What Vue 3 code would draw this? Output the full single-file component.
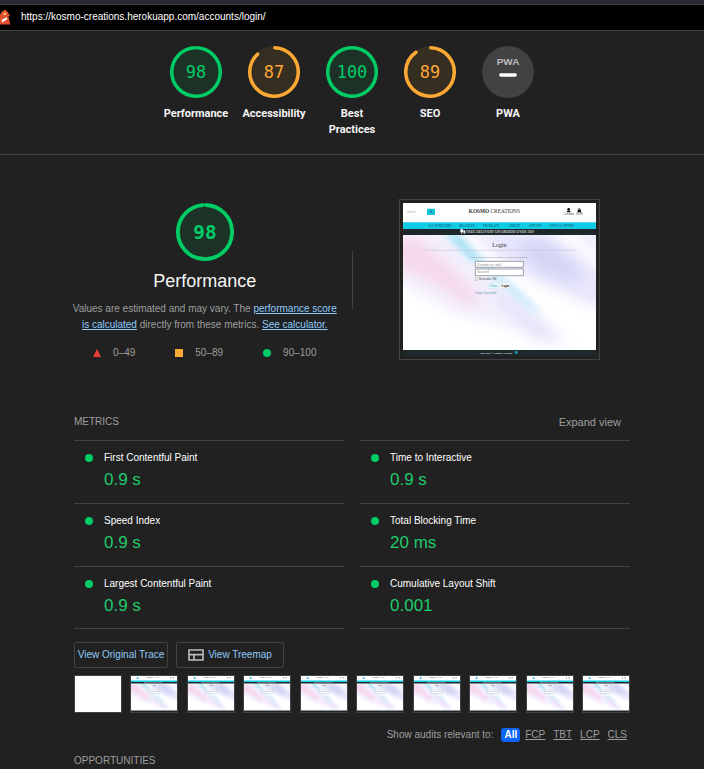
<script setup>
import { ref } from 'vue'

const R = 56
const CIRC = 2 * Math.PI * R

const categories = [
  { name: 'Performance', score: 98, tone: 'pass' },
  { name: 'Accessibility', score: 87, tone: 'average' },
  { name: 'Best Practices', score: 100, tone: 'pass' },
  { name: 'SEO', score: 89, tone: 'average' },
]

const metrics = [
  { name: 'First Contentful Paint', value: '0.9 s' },
  { name: 'Time to Interactive', value: '0.9 s' },
  { name: 'Speed Index', value: '0.9 s' },
  { name: 'Total Blocking Time', value: '20 ms' },
  { name: 'Largest Contentful Paint', value: '0.9 s' },
  { name: 'Cumulative Layout Shift', value: '0.001' },
]

const filters = ['All', 'FCP', 'TBT', 'LCP', 'CLS']
const filter = ref('All')

// The round caps reach a little past both ends of the arc.
function dash(score) {
  const gap = score === 100 ? 0 : Math.max(CIRC * (1 - score / 100), 9)
  return `${CIRC - gap} ${gap}`
}
</script>

<template>
  <div class="report">
    <header class="topbar">
      <svg class="logo" viewBox="0 0 11 16" aria-hidden="true">
        <path d="M1 5V3.4L4.8.6 8.4 3.4V5H9.6v2H8.4L10.2 15.6H0V5Z" fill="#e2502f" />
        <path d="M3.4 3.8h2.8V6H3.4Z" fill="#ffc56b" />
        <path d="M2 10.4 7 8.2l.3 2L2 13.6Z" fill="#fff" />
      </svg>
      <span>https://kosmo-creations.herokuapp.com/accounts/login/</span>
    </header>

    <nav class="scores">
      <a v-for="c in categories" :key="c.name" href="#performance" class="score">
        <svg class="gauge" :class="c.tone" viewBox="0 0 120 120">
          <circle class="disc" cx="60" cy="60" r="60" />
          <circle class="ring" cx="60" cy="60" :r="R" :stroke-dasharray="dash(c.score)" transform="rotate(-88 60 60)" />
          <text x="60" y="74" font-size="39">{{ c.score }}</text>
        </svg>
        <span class="label">{{ c.name }}</span>
      </a>
      <a href="#pwa" class="score">
        <svg class="gauge" viewBox="0 0 120 120">
          <circle cx="60" cy="60" r="60" fill="#424242" />
          <text class="pwa" x="60" y="43" font-size="23">PWA</text>
          <rect x="40" y="63" width="40" height="8" rx="3" fill="#fff" />
        </svg>
        <span class="label">PWA</span>
      </a>
    </nav>

    <main class="content">
      <section id="performance" class="overview">
        <div class="summary">
          <svg class="gauge big pass" viewBox="0 0 120 120">
            <circle class="disc" cx="60" cy="60" r="60" />
            <circle class="ring" cx="60" cy="60" :r="R" :stroke-dasharray="dash(98)" transform="rotate(-88 60 60)" />
            <text class="strong" x="60" y="74" font-size="40">98</text>
          </svg>
          <h1>Performance</h1>
          <p>
            Values are estimated and may vary. The <a href="#score">performance score<br />is calculated</a>
            directly from these metrics. <a href="#calculator">See calculator.</a>
          </p>
          <ul class="scale">
            <li><svg viewBox="0 0 8 8"><path d="M4 0 8 8H0Z" fill="#eb3b36" /></svg>0–49</li>
            <li><svg viewBox="0 0 8 8"><path d="M0 0h8v8H0Z" fill="#ffa935" /></svg>50–89</li>
            <li><svg viewBox="0 0 8 8"><circle cx="4" cy="4" r="4" fill="#0c6" /></svg>90–100</li>
          </ul>
        </div>
        <div class="rule"></div>
        <div class="shot">
          <svg viewBox="0 0 579 459">
            <defs>
              <filter id="soft" x="-30%" y="-30%" width="160%" height="160%"><feGaussianBlur stdDeviation="20" /></filter>
              <filter id="streak" x="-30%" y="-30%" width="160%" height="160%"><feGaussianBlur stdDeviation="11" /></filter>
              <clipPath id="pane"><path d="M0 96h579v345H0Z" /></clipPath>
              <symbol id="page" viewBox="0 0 579 459">
                <path d="M0 0h579v459H0Z" fill="#fff" />
                <g clip-path="url(#pane)">
                  <g filter="url(#soft)">
                    <path d="M-40 80H130L400 340 430 420 300 370 150 330-40 220Z" fill="#f3effc" />
                    <path d="M-30 110 40 100 130 180 240 290 200 310 90 240-30 190Z" fill="#f6d8ee" />
                    <path d="M200 80H430L640 240V330L480 270 330 200Z" fill="#e6e5fb" />
                    <path d="M330 120 430 110 520 190 530 240 420 210Z" fill="#d4d4f6" />
                    <path d="M500 80H620V180Z" fill="#ebeafc" />
                    <path d="M240 250 330 270 490 420 400 410Z" fill="#e6e2fa" />
                  </g>
                  <g filter="url(#streak)">
                    <path d="M120 90h46L240 170 210 180Z" fill="#a9e2f6" />
                    <path d="M200 165 240 170 350 265 420 335 380 320Z" fill="#c6e9fa" />
                  </g>
                </g>
                <path d="M72 17h24v19H72Z" fill="#17c5dc" />
                <circle cx="83" cy="25" r="3" fill="none" stroke="#126b7c" stroke-width="2" />
                <path d="m85 28 4 4" stroke="#126b7c" stroke-width="2" />
                <path d="M0 58h579v20H0Z" fill="#10cbe6" />
                <path d="M0 78h579v18H0ZM0 441h579v18H0Z" fill="#1e2729" />
                <g font-family="Liberation Serif, serif" fill="#333">
                  <text x="12" y="29" font-size="9" fill="#999">Search</text>
                  <text x="274" y="30" font-size="16" text-anchor="middle"><tspan font-weight="bold">KOSMO</tspan> CREATIONS</text>
                  <g font-size="9" text-anchor="middle">
                    <text x="497" y="37">Account</text>
                    <text x="529" y="37">£0.00</text>
                  </g>
                  <g font-size="9" text-anchor="middle" fill="#0c4c5c">
                    <text x="111" y="71">ALL JEWELLERY</text>
                    <text x="192" y="71">BRACELET</text>
                    <text x="265" y="71">NECKLACE</text>
                    <text x="334" y="71">ANKLET</text>
                    <text x="397" y="71">GIFT SET</text>
                    <text x="477" y="71">SPECIAL OFFERS</text>
                  </g>
                  <text x="190" y="91" font-size="11" fill="#fff">FREE DELIVERY ON ORDERS OVER £60!</text>
                  <text x="289" y="132" font-size="18" text-anchor="middle">Login</text>
                  <text x="288" y="165" font-size="7" text-anchor="middle" fill="#666">If you have not created an account yet, then please sign up first.</text>
                </g>
                <path d="M172 79h8v9h-8Zm9 3h4l2 3v4h-6Z" fill="#fff" />
                <circle cx="176" cy="90" r="2" fill="#fff" /><circle cx="184" cy="90" r="2" fill="#fff" />
                <circle cx="497" cy="19" r="4" fill="#111" /><path d="M491 28c0-7 12-7 12 0Z" fill="#111" />
                <path d="M524 20h10v8h-10Z" fill="#111" /><path d="M526 20c0-5 6-5 6 0" fill="none" stroke="#111" stroke-width="2" />
                <path d="M60 142h460" stroke="#ccc8dc" stroke-width="2" />
                <g fill="#fff" stroke="#707482" stroke-width="2">
                  <path d="M217 175h144v18H217ZM217 198h144v20H217Z" />
                  <path d="M217 225h7v7h-7Z" stroke-width="1" />
                </g>
                <path d="M256 239h32v17h-32Z" fill="#e9f7fc" stroke="#c8dbe4" />
                <path d="M291 239h32v17h-32Z" fill="#fff" stroke="#ccc" />
                <g font-family="Liberation Serif, serif" font-size="9" fill="#444">
                  <text x="223" y="188" fill="#888">Username or e-mail</text>
                  <text x="223" y="211" fill="#888">Password</text>
                  <text x="228" y="232">Remember Me</text>
                  <text x="272" y="251" text-anchor="middle" fill="#35a9cc">Home</text>
                  <text x="307" y="251" text-anchor="middle" font-weight="bold" fill="#111">Login</text>
                  <text x="216" y="272" fill="#5c9db8">Forgot Password?</text>
                  <text x="279" y="452" font-size="8" text-anchor="middle" fill="#fff">Copyright © Kosmo Creations</text>
                </g>
                <circle cx="340" cy="448" r="5" fill="#1596a9" />
              </symbol>
            </defs>
            <use href="#page" width="579" height="459" />
          </svg>
        </div>
      </section>

      <section>
        <div class="heading">
          <h2>METRICS</h2>
          <button type="button" class="expand">Expand view</button>
        </div>
        <div class="metrics">
          <div v-for="m in metrics" :key="m.name" class="metric">
            <i class="dot"></i>
            <div>
              <div class="name">{{ m.name }}</div>
              <div class="value">{{ m.value }}</div>
            </div>
          </div>
        </div>
        <div class="actions">
          <button type="button" class="trace">View Original Trace</button>
          <button type="button" class="treemap">
            <svg viewBox="0 0 16 12" fill="none" stroke="#bdbdbd" stroke-width="1.6">
              <path d="M1 1h14v10H1ZM1 5.6h14M6 5.6V11" />
            </svg>
            View Treemap
          </button>
        </div>
        <div class="filmstrip">
          <div v-for="n in 10" :key="n" class="frame">
            <svg viewBox="0 0 579 459" preserveAspectRatio="none">
              <path v-if="n === 1" d="M0 0h579v459H0Z" fill="#fff" />
              <use v-else href="#page" width="579" height="459" />
            </svg>
          </div>
        </div>
        <fieldset class="filters">
          <span>Show audits relevant to:</span>
          <div class="choices">
            <label v-for="f in filters" :key="f" :class="{ on: filter === f }">
              <input v-model="filter" type="radio" name="audit-filter" :value="f" />{{ f }}
            </label>
          </div>
        </fieldset>
      </section>

      <h2>OPPORTUNITIES</h2>
    </main>
  </div>
</template>

<style>
body {
  background: #212121;
}
</style>

<style scoped>
* {
  box-sizing: border-box;
}
.report {
  min-height: 100vh;
  overflow: hidden;
  background: #212121;
  color: #f5f5f5;
  font: 10px/16px "Liberation Sans", Arial, sans-serif;
}
svg {
  display: block;
  flex: none;
}
button {
  font: inherit;
  cursor: pointer;
}
.topbar {
  display: flex;
  align-items: center;
  gap: 10px;
  height: 31px;
  border-top: 4px solid #292a30;
  border-bottom: 1px solid #424242;
  box-shadow: inset 0 1px #424242;
  background: #000;
  color: #fff;
}
.logo {
  width: 11px;
  height: 16px;
}
.scores {
  display: flex;
  justify-content: center;
  height: 124px;
  padding-top: 15px;
  border-bottom: 1px solid #424242;
}
.score {
  display: flex;
  flex-direction: column;
  align-items: center;
  gap: 8px;
  width: 78px;
  padding: 0 4px;
  color: #f5f5f5;
  font-family: Roboto, "Liberation Sans", sans-serif;
  font-size: 11px;
  font-weight: bold;
  text-align: center;
  text-decoration: none;
}
.label {
  display: flex;
  justify-content: center;
}
.gauge {
  width: 52px;
  height: 52px;
}
.big {
  width: 58px;
  height: 58px;
}
.pass {
  color: #0c6;
}
.average {
  color: #ffa935;
}
.disc {
  fill: currentColor;
  opacity: 0.1;
}
.ring {
  fill: none;
  stroke: currentColor;
  stroke-width: 8;
  stroke-linecap: round;
}
.gauge text {
  fill: currentColor;
  font-family: "DejaVu Sans Mono", monospace;
  font-weight: normal;
  text-anchor: middle;
}
.gauge .strong {
  font-weight: bold;
}
.gauge .pwa {
  fill: #bdbdbd;
  font-family: "Liberation Sans", Arial, sans-serif;
  font-weight: bold;
}
.content {
  padding: 0 74px;
}
.overview {
  display: grid;
  grid-template-columns: minmax(0, 1fr) 1px minmax(0, 1fr);
  column-gap: 16px;
  align-items: center;
  padding-top: 43px;
}
.summary {
  display: flex;
  flex-direction: column;
  align-items: center;
  padding-top: 5px;
  text-align: center;
}
h1 {
  margin: 8px 0;
  font-size: 18px;
  font-weight: normal;
  line-height: 24px;
}
p {
  margin: 0;
  color: #9e9e9e;
  white-space: nowrap;
}
p a {
  color: #90caf9;
}
.scale {
  display: flex;
  gap: 40px;
  margin: 12px 0 0;
  padding: 0;
  color: #9e9e9e;
  list-style: none;
}
.scale li {
  display: flex;
  align-items: center;
  gap: 12px;
}
.scale svg {
  width: 8px;
  height: 8px;
}
.rule {
  height: 58px;
  background: #424242;
}
.shot {
  justify-self: center;
  width: 201px;
  padding: 3px;
  border: 1px solid #424242;
}
.shot svg {
  width: 100%;
}
.heading {
  display: flex;
  justify-content: space-between;
  align-items: center;
  margin-top: 53px;
  padding-bottom: 10px;
}
h2 {
  margin: 0;
  color: #9e9e9e;
  font-size: 10px;
  font-weight: normal;
}
.expand {
  padding: 0 9px;
  border: 0;
  background: none;
  color: #9e9e9e;
  font-size: 11px;
}
.metrics {
  display: grid;
  grid-template-columns: 1fr 1fr;
  column-gap: 16px;
}
.metric {
  display: flex;
  gap: 11px;
  height: 63px;
  padding: 9px 11px;
  border-top: 1px solid #424242;
}
.metric:nth-last-child(-n + 2) {
  border-bottom: 1px solid #424242;
}
.dot {
  flex: none;
  width: 8px;
  height: 8px;
  margin-top: 4px;
  border-radius: 50%;
  background: #0c6;
}
.name {
  color: #fff;
}
.value {
  margin-top: 2px;
  color: #1fcb6b;
  font-size: 17px;
  line-height: 24px;
}
.actions {
  display: flex;
  gap: 8px;
  margin-top: 13px;
}
.actions button {
  display: flex;
  justify-content: center;
  align-items: center;
  gap: 4px;
  height: 26px;
  padding: 0;
  border: 1px solid #424242;
  border-radius: 2px;
  background: none;
  color: #90caf9;
}
.trace {
  width: 94px;
}
.treemap {
  width: 108px;
}
.treemap svg {
  width: 16px;
  height: 12px;
}
.filmstrip {
  display: flex;
  justify-content: space-between;
  margin-top: 7px;
}
.frame {
  width: 48px;
  border: 1px solid #424242;
}
.frame svg {
  width: 100%;
  height: 36px;
}
.filters {
  display: flex;
  justify-content: flex-end;
  align-items: center;
  gap: 8px;
  margin: 14px 0 10px;
  padding: 0;
  border: 0;
  color: #9e9e9e;
}
.choices {
  display: flex;
  align-items: center;
  gap: 2px;
}
.choices label {
  padding: 0 3px;
  border-radius: 3px;
  line-height: 14px;
  text-decoration: underline;
  cursor: pointer;
}
.choices .on {
  background: #0b66f5;
  color: #fff;
  font-weight: bold;
  text-decoration: none;
}
.choices input {
  position: absolute;
  opacity: 0;
  pointer-events: none;
}
</style>
